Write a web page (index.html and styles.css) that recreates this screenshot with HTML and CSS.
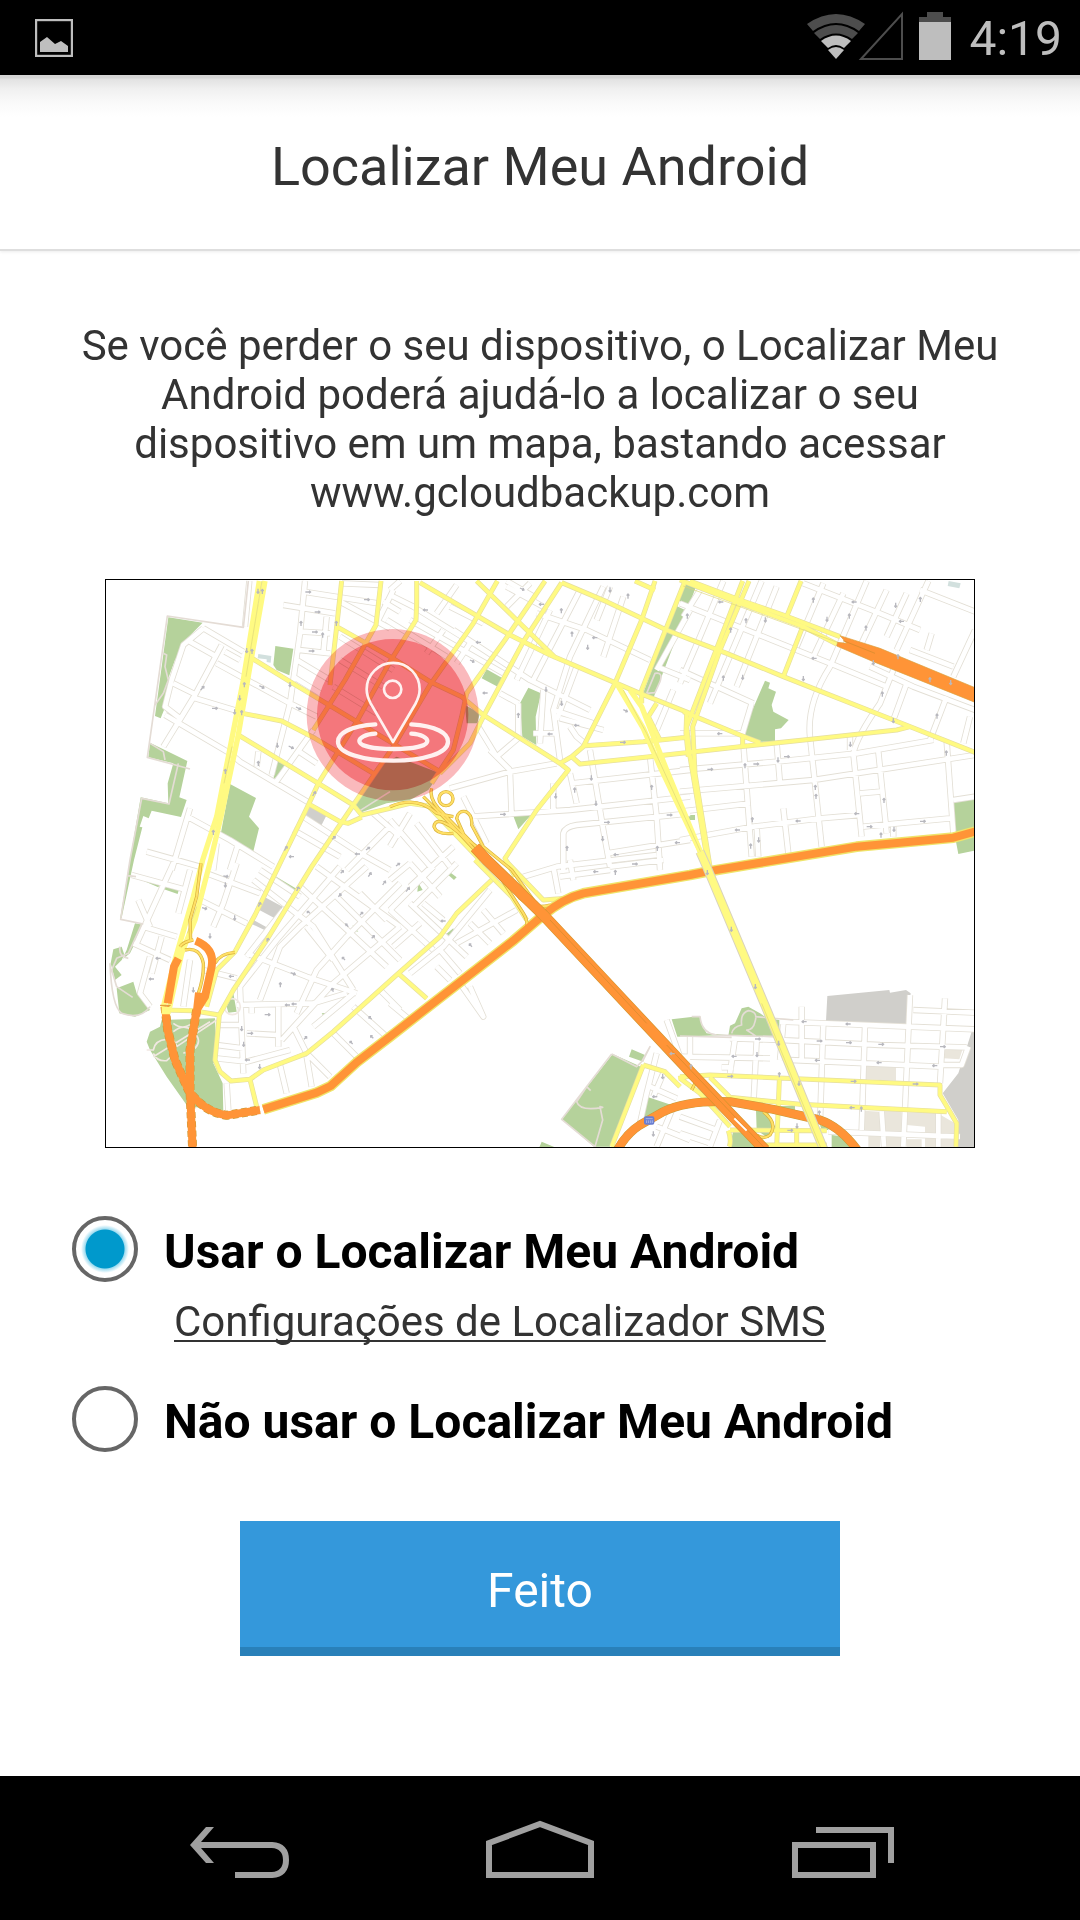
FILE: index.html
```
<!DOCTYPE html>
<html lang="pt-BR">
<head>
  <meta charset="UTF-8" />
  <meta name="viewport" content="width=device-width, initial-scale=1.0"/>
  <title>Localizar Meu Android</title>
  <link rel="stylesheet" href="styles.css">
</head>
<body>
  <div class="status-bar">
    <svg class="status-photo" width="38" height="38" viewBox="0 0 38 38" aria-hidden="true">
      <rect x="1" y="1" width="36" height="36" fill="none" stroke="#bebebe" stroke-width="2.4"/>
      <path fill="#bebebe" d="M5 23l7-5 8 7 6-3 7 5v6H5z"/>
    </svg>
    <div class="status-icons">
      <svg width="96" height="50" viewBox="0 0 96 50" aria-hidden="true">
        <path fill="#4d4d4d" d="M0 13Q29-7 58 13L52 20Q29 4 6 20z"/>
        <path fill="#4d4d4d" d="M7 22Q29 6 51 22L45 28Q29 17 13 28z"/>
        <path fill="#bebebe" d="M14 30Q29 19 44 30L37 37Q29 31 21 37z"/>
        <path fill="#bebebe" d="M21 39Q29 33 37 39L29 48z"/>
        <path fill="none" stroke="#4d4d4d" stroke-width="2" d="M54 48L95 3V48z"/>
      </svg>
      <svg class="status-battery" width="32" height="48" viewBox="0 0 32 48" aria-hidden="true">
        <path fill="#4d4d4d" d="M8 0h16v5h8v6H0V5h8z"/>
        <path fill="#bebebe" d="M0 10h32v38H0z"/>
      </svg>
      <span class="clock">4:19</span>
    </div>
  </div>

  <header class="header">
    <h1>Localizar Meu Android</h1>
  </header>

  <main class="content">
    <p class="intro">Se você perder o seu dispositivo, o Localizar Meu Android poderá ajudá-lo a localizar o seu dispositivo em um mapa, bastando acessar www.gcloudbackup.com</p>

    <svg class="map" viewBox="18 30 2604 1701" role="img" aria-label="Mapa">
      <defs>
        <g id="streets">
          <path d="M615 33L600 190 570 400 515 615M550 105L705 130M610 65L835 100M605 185L690 190M598 240L690 250M680 140L670 250M720 95L870 175M725 40L840 45M850 95L900 125M310 175L430 245M310 175L250 225 215 330 195 410 240 445M270 215L350 260M220 340L290 375M365 225L285 375 190 530M350 280L570 400 650 440M375 245L420 270M195 435L390 550 420 575 630 700M285 385L420 425M475 545L470 590M640 480L525 640M590 540L650 580M590 270L690 330M580 320L660 370M580 780L720 860M610 740L780 850 870 900M868 770L740 900M820 730L900 800M262 740L390 810 520 890M270 715L215 900M140 845L300 890M412 830L390 900M350 820L340 900M448 33L435 170M720 200L880 300M720 270L850 350M700 350L830 430M880 60L830 160M860 150L1040 260"/>
          <path transform="translate(0 870)" d="M220 10L160 140 110 250M95 45L260 90M270 30L235 160M115 120L150 200M410 10L370 130 340 200M300 120L440 190M320 40L480 100M460 60L640 200 760 390M600 80L720 190 860 320M720 20L530 240 420 380M800 20L600 200 540 260 480 420M900 70L740 230 650 330 590 460M900 200L700 370 545 540M550 150L440 290M440 280L620 350 770 400M620 200L700 300M700 100L800 200 900 300M780 100L860 180M410 435L640 430 740 400M420 380L430 640M535 440V560M355 495H420M350 555L430 565M350 595L440 605 570 570M440 520L530 525M455 440V460M580 500L620 580 690 650M620 590L635 680M540 615L560 700M380 670L385 750M100 250L210 300M130 200L230 230M150 290L120 400 150 440M185 230L155 340M310 330L410 355M270 300L250 440M640 500L760 400M700 520L770 590M760 440L860 530M840 390L900 450M480 30L600 110M650 20L900 200"/>
          <path transform="translate(870 0)" d="M0 75L70 110 240 215M60 150L340 310M160 180L110 250M200 45L140 130M30 33L0 60M350 33L440 85M420 40L350 110M190 180L420 330 600 420M240 220L200 280M570 60L430 330M640 50L540 260 490 420 510 570M700 80L640 260M440 130L590 180 780 270M350 50L460 110M660 50L620 150M560 290L500 450M460 360L450 520M385 400V500M430 490H500M490 420L610 460M540 470L560 500 590 525M510 445L640 480M180 655L360 605 500 580M360 605L365 740M240 740L540 720 900 680M265 470L320 560 390 500M540 610L560 700M600 540L640 780 660 890M780 560L800 740 810 900M545 640L900 600M520 900V790Q525 770 560 765L900 730M650 850L900 810M660 890L820 870M490 640V720M220 680L290 820M300 540L360 600M0 750L130 900M60 730L0 830M80 760L180 890M190 830L60 950M900 120L800 300M800 290L900 330M850 360L800 480M480 120L380 330M280 160L180 110M330 370L385 400"/>
          <path transform="translate(1740 0)" d="M60 60L10 140M130 33L60 200 0 340M245 33L90 400M290 50L170 350M0 100L250 200 450 280 620 350M0 300L220 400M370 40L600 130 720 180M430 40L350 230M490 70L400 260M560 33L450 290Q380 400 390 500L425 830M620 60L540 230M680 70L620 200M745 33L650 240M720 60L885 125M885 180L820 320M690 240L820 290M755 190L740 240M640 300L600 400Q530 500 520 550L545 800M680 340L640 450M570 290L700 350 885 420M800 380L750 510M870 440L850 520M510 500V540M0 600L290 575 530 550 760 510M0 665L400 630 885 555M0 725L210 700M0 810L220 770 420 745 540 735M190 520L215 860M290 520L300 640M310 715L325 850M595 545L620 790M800 515L820 790M540 670L600 665M550 770L810 745M230 770L235 860M640 770V800M820 690L885 680M0 490L190 490M215 400L185 500"/>
          <path transform="translate(870 870)" d="M0 150L130 20M60 10L150 110M200 10L70 140M0 150L130 270M60 130L230 290M300 90L160 260 60 340M280 150L340 220M240 190L300 250M380 150L200 250M150 270L210 340M140 320L180 360M400 50L500 20 800-15M490 20L505 100M540 0L550 60M510 50L660 30M210 370L280 470 240 380M0 430L60 480M800 580L770 700 750 790M830 480L870 590 900 600M780 680L860 715M850 740L800 860M820 640L790 710M800 800L900 840M0 60L60 10M10 260L90 190M100 130L160 180"/>
          <path transform="translate(1740 870)" d="M300 485L440 490 885 508M700 450L885 458M150 535L300 540 600 555 860 562M0 590L270 595M330 600L780 620M365 440V600M430 490L420 790M555 495L545 810M690 405L670 860M795 415L780 670M230 540L220 740M165 535L150 640M125 622H160M30 530V590M310 490L300 600M865 560L845 615H780M120 780L90 860M0 770L110 810M0 820L90 850M445 815L840 830M775 760V860M605 755L612 860"/>
        </g>
        <g id="avenues">
          <path d="M725 33L710 170 690 345M843 33L828 165 735 330 640 480M710 170L870 260 990 335 1085 380 1150 435 1380 580M445 258L570 335 770 455 1020 605M428 430L545 453 645 505 820 610M412 493L655 640 760 705 785 735 870 715 930 700 985 708 1140 870M628 703L720 755 745 760 785 742M1192 33L1120 160 990 345 880 530 760 705 635 890 500 1110 400 1260 358 1335M950 33V100L948 150 870 275 770 455 655 640 625 705 545 870 465 1035 405 1145 350 1200 320 1310"/>
          <path transform="translate(870 0)" d="M90 38L360 195 480 255 680 340 750 370 900 430M465 33L345 210 230 370 215 440 190 540 125 640M515 38L400 215 285 430 265 470 240 520 150 610M260 33L385 155 495 262M515 38L650 95 825 178 900 208 1010 250 1180 320 1510 450 1755 547M795 33L755 150 675 340 580 530 545 560 510 580M545 560L570 582 780 560 1050 530 1270 507 1520 480 1560 470M585 527L760 515 890 502M885 33L755 360V400M735 33L795 60M510 580L535 600 440 720 345 865 375 920M880 425L1050 495 1110 518M890 430L888 490 895 560M800 400L775 440 810 510"/>
          <path transform="translate(1740 0)" d="M363 33L320 140M368 170L310 320M188 500V525M188 33L20 470 30 560 85 890M207 33L120 240 38 470 45 610 90 890M30 33L180 90 310 135 480 200M0 30L180 100 370 170 470 222"/>
          <path d="M185 1320L280 1322 358 1335 345 1470 360 1505 393 1533 450 1528 490 1500 620 1450 700 1385 895 1210 1020 1100 1070 1030 1175 930M895 1210L980 1285M450 1528L470 1610M1125 870L1235 980 1280 1050M1215 870L1330 990 1400 985"/>
          <path transform="translate(1740 870)" d="M0 650L90 645 780 675V705L810 755 830 790 828 860M90 652L150 712 360 733 800 755M298 660L290 860M150 810L440 812M240 855H440M350 812V855M145 812Q155 840 148 860M0 655L60 700 150 800M-110 615L-45 635 0 680M-110 615L-205 860M-5 655L30 648"/>
        </g>
        <path id="coast" d="M490 1618L650 1568 692 1548 770 1477 870 1400 1240 1112 1330 1035Q1390 985 1450 970L1770 915 1820 905 2270 830 2560 803 2625 785"/>
        <path id="bridge" d="M1125 832L1160 870 1330 1035 1770 1505 1995 1740"/>
        <path id="west-tunnels" d="M195 1310L203 1380 225 1470 265 1560Q310 1625 380 1636L480 1620M290 1320L270 1440V1560L278 1740"/>
        <path id="ring" d="M1552 1740Q1580 1690 1620 1665L1690 1625Q1760 1590 1890 1595L2020 1618 2160 1650Q2220 1670 2272 1740"/>
        <path id="ramps" d="M995 655Q985 690 1030 730L1220 925 1260 985Q1300 1020 1350 1005M970 680L1040 750 1200 920 1270 1030Q1300 1080 1250 1110L1180 1155M1017 686a21 21 0 1 0 42 0a21 21 0 1 0-42 0M1090 790L1070 745Q1075 720 1098 725 1118 735 1115 765L1150 830 1235 900 1300 990M1060 790Q1010 795 1002 770 1006 740 1050 768L1130 830M870 710Q950 675 1010 730L1060 740M240 1130Q250 1115 280 1110M255 1140Q300 1130 310 1180 312 1220 295 1270M345 1180Q360 1150 405 1147M303 880L290 980 270 1050 272 1110M1775 1560L1790 1530M1990 1625Q2035 1660 2010 1695 1990 1710 1970 1695"/>
      </defs>

      <g class="map-park">
        <path d="M205 142L308 158 262 205 225 270 205 325 200 400 182 445 165 438zM150 518L262 573 238 682 260 690 243 741 155 722 146 745 130 738 119 770 127 772 102 870 65 1043 60 1048 90 870 122 682 205 700 203 640 220 580 145 562zM132 1065L105 1060 80 1140 65 1170 90 1150zM40 1138L65 1130 75 1160 45 1190 65 1215 45 1230 32 1180zM50 1255L100 1235 110 1270 150 1320 105 1340 58 1330zM526 228L580 236 568 316 530 300 520 285zM390 642L468 684 447 740 477 775 458 852 362 793zM528 572L560 588 520 630zM830 590L890 560 1020 610 985 660 930 690 860 700 780 728 765 705zM195 943L237 958 233 972 192 958zM127 923L180 942 175 952 130 932zM520 915L592 958 583 972 515 930z"/>
        <path d="M185 1350L345 1345 350 1470 340 1480 368 1540 370 1625 310 1615 262 1608 200 1520 150 1440 140 1415 150 1385 180 1370zM380 1310L400 1270 410 1325 385 1328zM665 1330L690 1328 670 1337zM758 1065L775 1085 762 1082z"/>
        <path transform="translate(870 0)" d="M415 353L453 370 437 440 439 525 397 500 390 400zM290 298L338 325 323 350 275 325zM225 405L270 430 262 460 230 460zM370 738L425 733 385 778zM880 33L920 45 897 105 867 92zM858 107L890 122 790 385 760 368zM888 735H915V750H895z"/>
        <path transform="translate(1740 0)" d="M255 332L270 338 265 355 288 365 275 405 280 425 326 450 303 475 285 478V515H240L195 495 200 460zM818 693L885 688V842L835 852 828 815z"/>
        <path transform="translate(870 870)" d="M178 35L200 52 192 60 175 45zM85 68L98 90 82 95zM165 225L190 205 192 215 170 230zM668 582L735 612 755 622 660 860H612L515 778zM725 568L765 585 760 605 717 590zM845 478L930 468 935 495 950 520 1010 525 862 530zM775 712L845 735 755 785zM455 845L495 862H448z"/>
        <path transform="translate(1740 870)" d="M185 445L205 440 240 460 262 475 298 480V530L145 527 150 497 165 490zM228 750L265 758 285 800 265 835 230 810zM300 738H345V765L300 755zM160 812L200 820 235 862H148zM420 795L450 800 470 810H425zM455 825L495 830 515 862H455z"/>
      </g>
      <path class="map-block" d="M628 708L680 735 662 770 612 742zM495 982L548 1010 530 1048 478 1020zM460 1050L515 1080 508 1087 455 1062zM2182 1278L2368 1260 2370 1268 2418 1260 2432 1270 2423 1362 2178 1353zM2615 1385H2625V1732H2570L2575 1650 2528 1570 2575 1510z"/>
      <path class="map-sand" transform="translate(1740 870)" d="M558 615L648 620V662L556 658zM552 752L600 755 610 795 612 822 550 812zM565 828H600V862H565zM612 752H665V862H612zM680 757H768V862H735V800L680 795zM782 765L825 790V862H782zM793 568L847 570 838 598 791 595zM680 838H725V862H680z"/>
      <path class="map-water" d="M475 252L514 258 512 278 500 276V268L473 265zM2546 33L2582 40 2578 55 2543 48z"/>

      <use class="street-edge" href="#streets"/>
      <use class="street-fill" href="#streets"/>
      <g class="map-path">
        <path class="path-edge" d="M445 33L430 172 202 138 142 562 270 597M235 580L207 702 125 685 90 870 62 1048 130 1062M85 917L108 920M190 250L200 255 195 290 205 330 190 370 165 405M150 520L190 545 195 570M780 722L870 665M125 1062L85 1150 50 1165 35 1200 50 1250 98 1282M30 1180Q35 1310 65 1330 120 1350 150 1310M60 1130Q55 1160 85 1165"/>
        <path d="M220 1360Q260 1390 290 1340M220 1385Q250 1360 275 1380 310 1410 285 1435L250 1450M140 1440L160 1440Q165 1410 200 1408 230 1410 230 1430L350 1350M160 1450Q170 1475 200 1472L230 1445M160 1460L330 1355M373 1310a14 14 0 1 0 48 0a14 14 0 1 0-48 0"/>
        <path class="path-edge" d="M1535 1452L1610 1490 1630 1470 1650 1430 1625 1475M1535 1452L1385 1648 1485 1730 1508 1650 1500 1610 1508 1612Q1440 1625 1430 1595L1460 1550 1472 1562M1640 370L1665 310Q1690 305 1680 335L1665 368 1640 370M1775 1340H1800Q1805 1390 1850 1395L2040 1400M1895 1390Q1900 1370 1925 1365 1920 1330 1945 1322 1975 1325 1965 1355 1960 1380 1940 1380L1970 1400M1740 1398L1895 1402M1965 1340L2080 1350"/>
      </g>

      <use class="avenue-edge" href="#avenues"/>
      <use class="avenue-fill" href="#avenues"/>
      <g class="avenue-wide">
        <path d="M478 33L430 330 385 560 350 740 308 870 280 980 222 1180 189 1315"/>
        <path d="M495 33L448 300 414 500 363 740 332 870 285 1050 245 1150 207 1320"/>
        <path d="M1550 340L1630 475 1680 590 1820 885"/>
        <path d="M1590 360L1625 410 1700 600 1815 880"/>
      </g>
      <path class="avenue-median" d="M486 33L438 320M396 530L372 640M290 1010L262 1090M1570 360L1640 490 1820 885M1750 48L2220 220"/>

      <use class="coast-edge" href="#coast"/>
      <use class="ramp-edge" href="#ramps"/>
      <use class="ramp-fill" href="#ramps"/>
      <g class="highway-edge">
        <use href="#west-tunnels" stroke-dasharray="18 10"/>
        <use href="#ring"/>
      </g>
      <g class="highway">
        <use href="#coast"/>
        <use href="#west-tunnels"/>
        <use href="#ring"/>
        <path d="M235 1165L222 1190 203 1300M287 1112Q345 1135 335 1190L315 1280 290 1320M297 1268L290 1330"/>
      </g>
      <use class="bridge-edge" href="#bridge"/>
      <use class="bridge-fill" href="#bridge"/>
      <path class="highway-band" d="M2220 197L2340 235 2625 353V397L2320 275 2210 228 2213 217 2240 220z"/>
      <path class="highway-seam" d="M2230 212L2325 250M1700 1425L1990 1730M1350 1050L1640 1360M180 1306H212"/>
      <path class="avenue-south-edge" d="M1800 845L1820 890 2005 1330 2172 1740"/>
      <path class="avenue-south" d="M1800 845L1820 890 2005 1330 2172 1740M185 1322L212 1322"/>
      <path class="avenue-median" d="M1985 1300L2165 1740"/>
      <path class="tunnel-mark" d="M1903 1645L1940 1682"/>
      <rect class="shield" x="1632" y="1639" width="31" height="25" rx="6"/>
      <path class="shield-mark" d="M1637 1646h21M1640 1651v8m6-8v8m6-8v8m5-8v8"/>

      <!-- one-way arrows -->
      <g class="arrows">
        <path d="M616 66h16m-5-4 5 4-5 4M644 126h16m-5-4 5 4-5 4M636 186h16m-5-4 5 4-5 4M626 243h16m-5-4 5 4-5 4M792 89h16m-5-4 5 4-5 4M336 415h16m-5-4 5 4-5 4M478 347l14 7m-7 1 7-1-3-6M588 411l14 7m-7 1 7-1-3-6M566 528l14 7m-7 1 7-1-3-6M2052 560h16m-5-4 5 4-5 4M1822 598h16m-5-4 5 4-5 4M1960 582h16m-5-4 5 4-5 4M2460 754h16m-5-4 5 4-5 4M2300 770h16m-5-4 5 4-5 4M1200 733h16m-5-4 5 4-5 4M1560 517h16m-5-4 5 4-5 4M1512 757h16m-5-4 5 4-5 4M1700 735h16m-5-4 5 4-5 4M1596 882h16m-5-4 5 4-5 4M494 1334h16m-5-4 5 4-5 4M442 1390h16m-5-4 5 4-5 4M306 1013l14 4m-6 3 6-3-3-6M370 918l14 2m-6 4 6-4-4-5M572 1208l14 5m-7 2 7-2-4-6M1965 1407h16m-5-4 5 4-5 4M2150 1413h16m-5-4 5 4-5 4M2238 1418h16m-5-4 5 4-5 4M2335 1423h16m-5-4 5 4-5 4M2520 1430h16m-5-4 5 4-5 4M1882 1519h16m-5-4 5 4-5 4M2252 1534h16m-5-4 5 4-5 4M2438 1542h16m-5-4 5 4-5 4M2062 1681h16m-5-4 5 4-5 4M1260 54l12 6m-6 1 6-1-3-6M1570 419l12 6m-6 1 6-1-3-6M1110 270l12 6m-6 1 6-1-3-6"/>
        <path d="M1870 96h-14m5-4-5 4 5 4M2270 96h-14m5-4-5 4 5 4M2412 154h-14m5-4-5 4 5 4M2150 265h-14m5-4-5 4 5 4M1867 491h-14m5-4-5 4 5 4M2102 753h-14m5-4-5 4 5 4M1920 780h-14m5-4-5 4 5 4M2278 731h-14m5-4-5 4 5 4M1332 103h-14m5-4-5 4 5 4M1492 203h-14m5-4-5 4 5 4M1438 466h-14m5-4-5 4 5 4M1358 492h-14m5-4-5 4 5 4M1556 854h-14m5-4-5 4 5 4M1740 818h-14m5-4-5 4 5 4M1495 905h-14m5-4-5 4 5 4M984 120h-14m5-4-5 4 5 4M1143 217h-14m5-4-5 4 5 4M1163 369h-14m5-4-5 4 5 4M582 860h-14m5-4-5 4 5 4M780 852h-14m5-4-5 4 5 4M182 1165h-14m5-4-5 4 5 4M162 1227h-14m5-4-5 4 5 4M402 1219h-14m5-4-5 4 5 4M570 1305h-14m5-4-5 4 5 4M590 1302h-14m5-4-5 4 5 4M450 1470h-14m5-4-5 4 5 4M1037 1053h-14m5-4-5 4 5 4M1672 1580h-14m5-4-5 4 5 4M1724 1451h-14m5-4-5 4 5 4M2120 1355h-14m5-4-5 4 5 4M2252 1362h-14m5-4-5 4 5 4M1910 1459h-14m5-4-5 4 5 4M2160 1471h-14m5-4-5 4 5 4M2345 1478h-14m5-4-5 4 5 4M2512 1487h-14m5-4-5 4 5 4M2264 1613h-14m5-4-5 4 5 4"/>
        <path d="M603 168v-14m-4 5 4-5 4 5M668 203v-14m-4 5 4-5 4 5M709 168v-14m-4 5 4-5 4 5M433 352v-14m-4 5 4-5 4 5M425 436v-14m-4 5 4-5 4 5M456 252v-14m-4 5 4-5 4 5M487 72v-14m-4 5 4-5 4 5M475 588v-14m-4 5 4-5 4 5M376 612v-14m-4 5 4-5 4 5M340 795v-14m-4 5 4-5 4 5M1255 444v-14m-4 5 4-5 4 5M1384 130v-14m-4 5 4-5 4 5M1416 200v-14m-4 5 4-5 4 5M1584 86v-14m-4 5 4-5 4 5M1401 843v-14m-4 5 4-5 4 5M1672 843v-14m-4 5 4-5 4 5M1424 668v-14m-4 5 4-5 4 5M1655 660v-14m-4 5 4-5 4 5M1762 146v-14m-4 5 4-5 4 5M1938 160v-14m-4 5 4-5 4 5M1870 332v-14m-4 5 4-5 4 5M1892 188v-14m-4 5 4-5 4 5M2140 98v-14m-4 5 4-5 4 5M2248 146v-14m-4 5 4-5 4 5M2298 182v-14m-4 5 4-5 4 5M2461 96v-14m-4 5 4-5 4 5M2394 268v-14m-4 5 4-5 4 5M2490 337v-14m-4 5 4-5 4 5M2511 446v-14m-4 5 4-5 4 5M2539 557v-14m-4 5 4-5 4 5M2352 699v-14m-4 5 4-5 4 5M2146 660v-14m-4 5 4-5 4 5M2148 687v-14m-4 5 4-5 4 5M1935 595v-14m-4 5 4-5 4 5M1957 757v-14m-4 5 4-5 4 5M1952 836v-14m-4 5 4-5 4 5M2343 803v-14m-4 5 4-5 4 5M2347 380v-14m-4 5 4-5 4 5M541 1252v-14m-4 5 4-5 4 5M1546 915v-14m-4 5 4-5 4 5M1773 1498v-14m-4 5 4-5 4 5M2038 1522v-14m-4 5 4-5 4 5M2284 1625v-14m-4 5 4-5 4 5M2158 1637v-14m-4 5 4-5 4 5"/>
        <path d="M532 518v14m-4-5 4 5 4-5M570 336v14m-4-5 4 5 4-5M419 376v14m-4-5 4 5 4-5M404 418v14m-4-5 4 5 4-5M440 234v14m-4-5 4 5 4-5M474 56v14m-4-5 4 5 4-5M1530 52v14m-4-5 4 5 4-5M1463 224v14m-4-5 4 5 4-5M1338 350v14m-4-5 4 5 4-5M1474 616v14m-4-5 4 5 4-5M1488 692v14m-4-5 4 5 4-5M1508 798v14m-4-5 4 5 4-5M1367 670v14m-4-5 4 5 4-5M1385 392v14m-4-5 4 5 4-5M1996 142v14m-4-5 4 5 4-5M1928 314v14m-4-5 4 5 4-5M2110 318v14m-4-5 4 5 4-5M2181 140v14m-4-5 4 5 4-5M2387 98v14m-4-5 4 5 4-5M2552 330v14m-4-5 4 5 4-5M2034 562v14m-4-5 4 5 4-5M2251 515v14m-4-5 4 5 4-5M2380 444v14m-4-5 4 5 4-5M2320 270v14m-4-5 4 5 4-5M1976 802v14m-4-5 4 5 4-5M2382 770v14m-4-5 4 5 4-5M376 937v14m-4-5 4 5 4-5M404 1036v14m-4-5 4 5 4-5M280 1252v14m-4-5 4 5 4-5M425 1368v14m-4-5 4 5 4-5M431 1415v14m-4-5 4 5 4-5M479 1482v14m-4-5 4 5 4-5M330 1090v14m-4-5 4 5 4-5M1822 900v14m-4-5 4 5 4-5M1894 1070v14m-4-5 4 5 4-5M1966 1242v14m-4-5 4 5 4-5M2036 1412v14m-4-5 4 5 4-5M1971 1446v14m-4-5 4 5 4-5M2091 1660v14m-4-5 4 5 4-5M1688 1512v14m-4-5 4 5 4-5M1660 1684v14m-4-5 4 5 4-5M2097 1532v14m-4-5 4 5 4-5"/>
        <path d="M302 360l10-11m-7 2 7-2-1 7M638 678l8-13m-6 4 6-4 1 7M553 842l8-13m-6 4 6-4 1 7M696 808l10-8m-7 0 7 0-2 6M798 840l11-8m-7 0 7 0-2 6M888 888l11-8m-7 0 7 0-2 6M745 1070l-8-8m2 6-2-6 6 1M805 920l8-12m-6 3 6-3 1 7M848 945l8-12m-6 3 6-3 1 7M722 910l8-8m-6 0 6 0 0 6M715 980l8-8m-6 0 6 0 0 6M780 1035l8-8m-6 0 6 0 0 6M815 1105l8-8m-6 0 6 0 0 6M700 1265l-4-10m-3 6 3-6 6 3M612 1408l8-8m-6 0 6 0 0 6M758 1422l-8-8m0 6 0-6 6 0M820 1405l-8-8m0 6 0-6 6 0M815 1348l-8-8m0 6 0-6 6 0M735 1170l-8-8m0 6 0-6 6 0M630 1030l-8-6m0 6 0-6 6 0M500 1115l5-10m-6 3 6-3 3 6M475 1010l6-12m-6 3 6-3 3 6M590 963l6-12m-6 3 6-3 3 6M918 965l10-12m-7 2 7-2 0 7M1116 1130l-8-8m0 6 0-6 6 0"/>
      </g>

      <!-- current position -->
      <circle class="pulse-outer" cx="878" cy="435" r="258"/>
      <circle class="pulse-inner" cx="878" cy="434" r="227"/>
      <g class="pin">
        <path d="M879 516L812 400Q800 378 800 358A79 79 0 0 1 959 358Q959 378 946 402z"/>
        <circle cx="878" cy="358" r="26"/>
        <path class="pin-ring" d="M826 463C750 468 714 490 714 515C714 550 790 572 880 572S1044 550 1044 515C1044 490 1010 468 934 463"/>
        <path class="pin-ring" d="M826 491C795 493 778 503 778 513C778 528 820 537 880 537S982 528 982 513C982 503 965 493 934 491"/>
      </g>
    </svg>

    <form class="options">
      <div class="option">
        <input type="radio" name="locator" id="use-locator" checked>
        <label for="use-locator">Usar o Localizar Meu Android</label>
      </div>
      <a class="sms-link" href="#">Configurações de Localizador SMS</a>
      <div class="option">
        <input type="radio" name="locator" id="no-locator">
        <label for="no-locator">Não usar o Localizar Meu Android</label>
      </div>
      <button type="button" class="done-button">Feito</button>
    </form>
  </main>

  <nav class="nav-bar">
    <button type="button" aria-label="Voltar">
      <svg width="108" height="60" viewBox="0 0 108 60">
        <path class="nav-solid" d="M4 27L20 9H28L15 24V30L28 45H20z"/>
        <path d="M12 27H86Q100 28 100 42T86 57H49"/>
      </svg>
    </button>
    <button type="button" aria-label="Início">
      <svg width="108" height="60" viewBox="0 0 108 60">
        <path d="M3 57V25L54 6 105 25V57z"/>
      </svg>
    </button>
    <button type="button" aria-label="Recentes">
      <svg width="108" height="60" viewBox="0 0 108 60">
        <path d="M9 27H87V57H9zM30 12H105V45"/>
      </svg>
    </button>
  </nav>
</body>
</html>
```
FILE: styles.css
```
*{margin:0;padding:0;box-sizing:border-box}
body{min-height:100vh;display:flex;flex-direction:column;background:#fff;color:#333;font-family:Roboto,sans-serif}

.status-bar{display:flex;justify-content:space-between;align-items:center;height:75px;padding:0 18px 0 35px;background:#000}
.status-icons{display:flex;align-items:center}
.status-icons svg{margin-bottom:4px}
.status-icons .status-battery{margin:0 18px 4px 16px}
.clock{padding-top:2px;color:#bebebe;font-size:48px;line-height:56px}

.header{display:flex;justify-content:center;align-items:center;height:176px;padding-top:10px;border-bottom:2px solid #dedede;background:linear-gradient(#d5d5d5 0,#d5d5d5 3px,#e2e2e2 4px,#f0f0f0 14px,#fafafa 28px,#fff 42px);box-shadow:0 1px 3px rgba(0,0,0,0.08)}
.header h1{font-size:54px;font-weight:400;line-height:64px}

.content{padding:70px 72px 0}
.intro{font-size:42px;line-height:49px;text-align:center}
.map{display:block;width:100%;max-width:870px;height:auto;margin:62px auto 0;border:1px solid #000;background:#fff}

.map use,.map path{stroke-linejoin:round}
.map-park{fill:#b5d29b}
.map-block{fill:#d0cfcb}
.map-sand{fill:#eae6dc}
.map-water{fill:#d2e0de}
.street-edge{fill:none;stroke:#e3dfd5;stroke-width:19}
.street-fill{fill:none;stroke:#fff;stroke-width:14}
.map-path{fill:none;stroke:#f1e8e2;stroke-width:5}
.path-edge{stroke:#e4dcd5}
.avenue-edge{fill:none;stroke:#e6dfa0;stroke-width:15}
.avenue-fill{fill:none;stroke:#fffa82;stroke-width:11}
.avenue-wide{fill:none;stroke:#fffa82;stroke-width:16}
.avenue-median{fill:none;stroke:#ded677;stroke-width:2}
.avenue-south-edge{fill:none;stroke:#d9d3bd;stroke-width:28}
.avenue-south{fill:none;stroke:#fffa82;stroke-width:22}
.coast-edge{fill:none;stroke:#efe46a;stroke-width:32}
.ramp-edge{fill:none;stroke:#d8b03c;stroke-width:10}
.ramp-fill{fill:none;stroke:#ffe066;stroke-width:6}
.highway-edge{fill:none;stroke:#c79b35;stroke-width:27}
.highway{fill:none;stroke:#ff9437;stroke-width:24}
.bridge-edge{fill:none;stroke:#d4952e;stroke-width:34}
.bridge-fill{fill:none;stroke:#ff9437;stroke-width:30}
.highway-band{fill:#ff9437;stroke:#d9a03c;stroke-width:2}
.highway-seam{fill:none;stroke:#e08e30;stroke-width:3}
.tunnel-mark{fill:none;stroke:#fff;stroke-width:6}
.shield{fill:#6b7fd0}
.shield-mark{fill:none;stroke:#c5cdf0;stroke-width:2}
.arrows{fill:none;stroke:#b8b8be;stroke-width:4}
.pulse-outer{fill:#fab9bc;mix-blend-mode:multiply}
.pulse-inner{fill:#f9a4a8;mix-blend-mode:multiply}
.pin{fill:none;stroke:#fff1f0;stroke-width:8}
.pin-ring{stroke-width:13;stroke-linecap:round}

.options{display:flex;flex-direction:column;align-items:flex-start;margin-top:66px}
.option{display:flex;align-items:center;gap:26px;height:70px}
.option input{appearance:none;width:66px;height:66px;border:4px solid #666;border-radius:50%;background:#fff}
.option input:checked{background:radial-gradient(circle,#0099cc 0,#0099cc 19px,#9fdcf0 20px,#fff 24px)}
.option label{padding-top:5px;color:#000;font-size:48px;font-weight:700;line-height:56px}
.sms-link{margin:13px 0 37px 102px;color:#333;font-size:42px;line-height:50px;text-decoration-thickness:2px;text-underline-offset:4px;text-decoration-skip-ink:none}
.done-button{align-self:center;width:600px;max-width:100%;height:135px;margin-top:67px;padding-top:12px;border:0;border-bottom:9px solid #2980b9;background:#3498db;color:#fff;font-family:inherit;font-size:48px;cursor:pointer}

.nav-bar{display:flex;justify-content:center;height:144px;margin-top:auto;background:#000}
.nav-bar button{display:flex;flex:0 1 300px;align-items:center;justify-content:center;border:0;background:none;cursor:pointer}
.nav-bar svg{fill:none;stroke:#a0a0a0;stroke-width:6}
.nav-solid{fill:#a0a0a0;stroke:none}
```
